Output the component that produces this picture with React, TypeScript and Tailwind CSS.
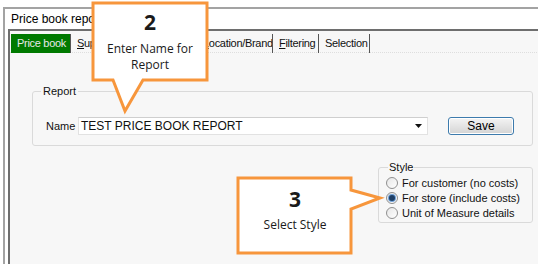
import React from 'react';

const tabs = [
  { label: 'Price book', key: '', w: 'w-[60px]', active: true },
  { label: 'uppliers', key: 'S', w: 'w-[66px]' },
  { label: 'ategory', key: 'C', w: 'w-[60px]' },
  { label: 'ocation/Brand', key: 'L', w: 'w-[76px]' },
  { label: 'iltering', key: 'F', w: 'w-[46px]' },
  { label: 'Selection', key: '', w: 'w-[51px]' },
];

function Radio({ checked }: { checked?: boolean }) {
  return (
    <span className="w-[12px] h-[12px] rounded-full border border-[#8f8f8f] bg-gradient-to-br from-[#e6e6e6] to-[#ffffff] flex items-center justify-center shrink-0">
      {checked && <span className="w-[6px] h-[6px] rounded-full bg-[#1e3f66] ring-1 ring-[#6fa0d8]" />}
    </span>
  );
}

export default function App() {
  return (
    <div className="relative w-[538px] h-[264px] overflow-hidden bg-white font-['Liberation_Sans',Arial,sans-serif] text-[#111]">
      {/* window */}
      <div className="ml-[3px] mt-[7px] w-[560px] h-[260px] border-t-2 border-l-2 border-[#a3a3a3] bg-white">
        <div className="h-[20px] pl-[6px] text-[12px] leading-[20px] text-black">Price book report</div>
        <div className="ml-[3px] h-[240px] border-t-2 border-l-2 border-[#6e6e6e] bg-[#f7f7f7]">
          {/* tabs */}
          <div className="flex items-stretch h-[22px] pt-[3px] pl-px border-b border-dotted border-[#dedede] text-[11px] tracking-[-0.3px]">
            {tabs.map(t => (
              <div
                key={t.label}
                className={`${t.w} h-[19px] shrink-0 flex items-center whitespace-nowrap overflow-hidden border-r border-[#555] pl-[6px] ${
                  t.active ? 'bg-[#007a00] text-[#e8e8e8]' : 'text-[#111]'
                }`}
              >
                {t.key && <span className="underline">{t.key}</span>}
                {t.label}
              </div>
            ))}
          </div>

          {/* report group */}
          <fieldset className="ml-[22px] mt-[32px] w-[501px] h-[61px] border border-[#dadada] rounded-[3px] pl-[13px] pr-[17px]">
            <legend className="ml-[-5px] px-[2px] text-[11px] leading-[13px]">Report</legend>
            <div className="flex items-center mt-[19px] text-[11px]">
              <span className="w-[32px]">Name</span>
              <div className="w-[350px] h-[18px] bg-white border border-[#e2e2e2] border-t-[#cfcfcf] flex items-center justify-between pl-[2px] pr-[5px] text-[12px]">
                <span>TEST PRICE BOOK REPORT</span>
                <svg width="7" height="4" viewBox="0 0 7 4">
                  <path d="M0 0H7L3.5 4Z" fill="#111" />
                </svg>
              </div>
              <button className="ml-[20px] w-[66px] h-[18px] rounded-[3px] border border-[#3d7bad] bg-gradient-to-b from-[#f4f4f4] to-[#d4d4d4] shadow-[inset_0_0_0_1px_#ffffff] text-[12px] leading-[16px] text-black">
                Save
              </button>
            </div>
          </fieldset>

          {/* style group */}
          <fieldset className="ml-[368px] mt-[15px] w-[155px] h-[62px] border border-[#dadada] rounded-[3px] pl-[7px]">
            <legend className="ml-[2px] px-px text-[11px] leading-[13px]">Style</legend>
            <div className="flex flex-col gap-[3px] mt-[3px] text-[11px] leading-[12px]">
              <label className="flex items-center gap-[4px]"><Radio />For customer (no costs)</label>
              <label className="flex items-center gap-[4px]"><Radio checked />For store (include costs)</label>
              <label className="flex items-center gap-[4px]"><Radio />Unit of Measure details</label>
            </div>
          </fieldset>
        </div>
      </div>

      {/* callouts */}
      <svg className="absolute left-0 top-0 pointer-events-none" width="538" height="264" viewBox="0 0 538 264">
        <path d="M93 3H207V80H143L125 111L113 80H93Z" fill="#fff" stroke="#f7963c" strokeWidth="3" strokeLinejoin="miter" />
        <path d="M238 178H351V190L380 198L351 209V253H238Z" fill="#fff" stroke="#f7963c" strokeWidth="3" strokeLinejoin="miter" />
      </svg>
      <div className="absolute left-[95px] top-[9px] w-[110px] text-center font-['Open_Sans',sans-serif] text-[#1a1a1a]">
        <div className="text-[21px] font-bold leading-[26px]">2</div>
        <div className="mt-[6px] text-[12px] leading-[16px]">Enter Name for<br />Report</div>
      </div>
      <div className="absolute left-[240px] top-[186px] w-[110px] text-center font-['Open_Sans',sans-serif] text-[#1a1a1a]">
        <div className="text-[21px] font-bold leading-[26px]">3</div>
        <div className="mt-[5px] text-[12px] leading-[16px]">Select Style</div>
      </div>
    </div>
  );
}
